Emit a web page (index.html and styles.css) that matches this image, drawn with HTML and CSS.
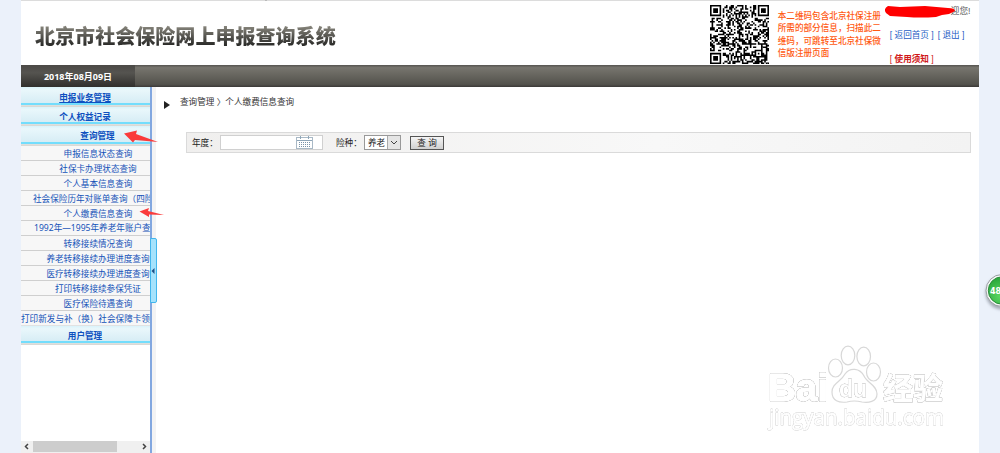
FILE: index.html
```html
<!DOCTYPE html>
<html lang="zh-CN">
<head>
<meta charset="utf-8">
<title>北京市社会保险网上申报查询系统</title>
<link rel="stylesheet" href="styles.css">
</head>
<body>
<div class="page">
  <header class="header">
    <h1 class="title">北京市社会保险网上申报查询系统</h1>
    <svg class="qr" viewBox="0 0 37 37"><path id="qr-modules" fill="#000"/></svg>
    <p class="qr-note">本二维码包含北京社保注册<br>所需的部分信息，扫描此二<br>维码，可跳转至北京社保微<br>信版注册页面</p>
    <div class="user">
      <span class="welcome">迎您!</span>
      <div class="links"><span>[ 返回首页 ]</span><span>[ 退出 ]</span></div>
      <div class="notice">[ <b>使用须知</b> ]</div>
    </div>
  </header>
  <div class="bar"><div class="date">2018年08月09日</div></div>
  <div class="main">
    <nav class="sidebar">
      <div class="head"><u>申报业务管理</u></div>
      <div class="head">个人权益记录</div>
      <div class="head sub">查询管理</div>
      <ul class="items">
        <li>申报信息状态查询</li>
        <li>社保卡办理状态查询</li>
        <li>个人基本信息查询</li>
        <li class="long">社会保险历年对账单查询（四险</li>
        <li>个人缴费信息查询</li>
        <li class="long years">1992年—1995年养老年账户查</li>
        <li>转移接续情况查询</li>
        <li>养老转移接续办理进度查询</li>
        <li>医疗转移接续办理进度查询</li>
        <li>打印转移接续参保凭证</li>
        <li>医疗保险待遇查询</li>
        <li class="long full">打印新发与补（换）社会保障卡领</li>
      </ul>
      <div class="head">用户管理</div>
      <div class="scroll">
        <svg viewBox="0 0 12 11"><path d="M7 3 4.500 5.500 7 8"/></svg>
        <i class="thumb"></i>
        <svg class="next" viewBox="0 0 12 11"><path d="M5 3 7.500 5.500 5 8"/></svg>
      </div>
    </nav>
    <div class="divider"></div>
    <section class="content">
      <div class="crumbs"><i class="marker"></i><span>查询管理 〉个人缴费信息查询</span></div>
      <div class="query">
        <span class="label">年度：</span>
        <span class="year">
          <svg viewBox="0 0 18 13"><rect x=".5" y="1.500" width="16" height="11" fill="#fff" stroke="#a9b9c6"/><path d="M1 4.500h15M4.500 0v3M12.500 0v3" stroke="#8ea5b7" fill="none"/><path d="M3 6.500h11M3 8.500h11M3 10.500h11" stroke="#7993a8" stroke-dasharray="1 1"/></svg>
        </span>
        <span class="label kind">险种：</span>
        <span class="select"><span>养老</span><i><svg viewBox="0 0 12 13"><path d="M3 5 6 8 9 5" fill="none" stroke="#444"/></svg></i></span>
        <span class="button">查 询</span>
      </div>
    </section>
  </div>
</div>
<div class="handle"><svg viewBox="0 0 4 6"><path d="M3.500 0v6L.5 3z" fill="#1d4f86"/></svg></div>
<svg class="overlay" viewBox="0 0 1000 453">
  <defs>
    <radialGradient id="ball" cx=".45" cy=".7" r=".65"><stop offset="0" stop-color="#5bd762"/><stop offset="1" stop-color="#2aa83c"/></radialGradient>
    <filter id="soft" x="-30%" y="-30%" width="160%" height="160%"><feGaussianBlur stdDeviation="1.500"/></filter>
  </defs>
  <path d="M266 0v1" stroke="#999"/>
  <path d="M888 6 900 7 925 6 948 8Q955 8 955 11L949 14 942 15 936 17Q920 18 907 17L890 16 886 13Q883 9 888 6Z" fill="#f00"/>
  <path d="M124 133.500 137 130.500 136 134 158 142 135 140 133 142.500Z" fill="#fa3b3b"/>
  <path d="M139.500 211.500 149 208 148 211 164 215 149 214.500 149 217Z" fill="#fa3b3b"/>
  <circle cx="1002" cy="293" r="16.500" fill="#6d7480" opacity=".55" filter="url(#soft)"/>
  <circle cx="1002" cy="290.500" r="16" fill="#f4f7f5" stroke="#9a9fa3"/>
  <circle cx="1002" cy="290.500" r="13.700" fill="url(#ball)" stroke="#2b8d3b" stroke-width="1"/>
  <text x="990" y="293.500" class="ball-text">48</text>
  <g class="mark">
    <g class="paw">
      <ellipse cx="835.500" cy="368" rx="7" ry="9"/><ellipse cx="848" cy="355.500" rx="6.800" ry="9.300"/>
      <ellipse cx="863.700" cy="356.500" rx="6.800" ry="9.300"/><ellipse cx="873.500" cy="372" rx="7" ry="9"/>
      <path d="M832 392C832 383 841 382 845 374C850 367 860 368 864 376C867 383 877 385 877 394C877 402 868 403 862 402Q854 400 847 402C839 403 832 401 832 392Z"/>
    </g>
    <text x="768" y="400.500" font-size="39" font-weight="bold" textLength="60">Bai</text>
    <text x="839" y="396.500" font-size="23" font-weight="bold" textLength="28" class="du">du</text>
    <text x="883" y="398.500" font-size="30" font-weight="bold" textLength="60" class="cjk">经验</text>
    <text x="769" y="425" font-size="22" textLength="175" lengthAdjust="spacingAndGlyphs" class="site">jingyan.baidu.com</text>
  </g>
</svg>
<script src="qr.js"></script>
</body>
</html>
```
FILE: styles.css
```css
* { box-sizing: border-box; }
body { margin: 0; width: 1000px; height: 453px; overflow: hidden; position: relative; background: #ebf1fa; color: #333; font-family: "Liberation Sans", "Noto Sans CJK SC", sans-serif; font-size: 8.6px; line-height: 12px; }
.page { width: 958px; height: 453px; margin-left: 21px; display: flex; flex-direction: column; background: #fff; border-top: 1px solid #dcdcdc; }
.header { height: 64px; flex: none; display: flex; }
.title { width: 301px; margin: 19px 0 0 14px; height: 32px; font: 900 20.06px/32px "Noto Sans CJK SC", sans-serif; white-space: nowrap; color: transparent; background: linear-gradient(#85837a 20%, #2c2c2a 78%); -webkit-background-clip: text; background-clip: text; }
.qr { width: 59px; height: 59px; margin: 4px 0 0 374px; flex: none; }
.qr-note { width: 106px; margin: 9px 0 0 9px; color: #ff5a12; font-weight: 500; line-height: 12.3px; white-space: nowrap; }
.user { width: 90px; margin-left: 7px; padding-top: 4px; white-space: nowrap; }
.welcome { display: block; margin-left: 61px; color: #555; }
.links { display: flex; gap: 4px; margin-top: 12px; color: #1c5cc4; }
.notice { margin-top: 12px; color: #d01818; }
.bar { height: 22px; flex: none; background: linear-gradient(#55534f 0, #77756e 12%, #53524c 88%, #3b3937 100%); }
.date { width: 114px; height: 22px; background: linear-gradient(#4b4946, #555450 35%, #302f2c); color: #fff; font: bold 9px/23px "Noto Sans", "Noto Sans CJK SC", sans-serif; text-align: center; }
.main { display: flex; flex: 1; min-height: 0; }
.sidebar { width: 129px; flex: none; overflow: hidden; display: flex; flex-direction: column; color: #1452b8; }
.head { height: 19px; flex: none; padding-right: 1px; text-align: center; font-weight: bold; line-height: 20px; color: #0d50bf; border-bottom: 1px solid #d9d9d6; background: linear-gradient(#d9f3fa 0, #e9f7fb 15%, #d7edf5 82%, #73ddfc 83%, #73ddfc 93%, #dedfdc 94%); }
.head:first-child { height: 20px; line-height: 22px; }
.head.sub { padding-left: 25px; height: 20px; }
.items { list-style: none; margin: 0; padding: 0; background: #f7f7f7; }
.items li { height: 15px; width: 154px; text-align: center; line-height: 16px; border-bottom: 1px solid #cfcfcf; white-space: nowrap; }
.items .long { text-align: left; padding-left: 12px; }
.items .years { padding-left: 13px; font-family: "Noto Sans", "Noto Sans CJK SC", sans-serif; font-size: 8.6px; line-height: 14px; }
.items .full { padding-left: 0; border-bottom-color: #e2e2e2; }
.scroll { margin-top: auto; height: 12px; flex: none; display: flex; background: #f0f0f0; }
.scroll svg { width: 12px; height: 11px; fill: none; stroke: #444; stroke-width: 1.500; }
.scroll .next { margin-left: auto; }
.thumb { width: 84px; height: 11px; background: #cdcdcd; }
.divider { width: 6px; flex: none; background: #f3f3f4; border-left: 2px solid #82a7e0; }
.content { flex: 1; }
.crumbs { display: flex; padding: 9px 0 0 8px; }
.marker { margin-top: 5px; border-left: 6px solid #222; border-top: 4px solid transparent; border-bottom: 4px solid transparent; height: 8px; }
.crumbs span { height: 12px; margin-left: 10px; }
.query { width: 785px; height: 21px; margin: 23px 0 0 30px; padding-left: 5px; display: flex; align-items: center; border: 1px solid #dadada; background: linear-gradient(90deg, #f0efee, #f8f8f8 60%, #f3f3f3); color: #222; }
.label { width: 28px; white-space: nowrap; }
.kind { margin-left: 13px; }
.year { width: 103px; height: 15px; border: 1px solid #d0d0d0; background: #fff; padding: 0 0 0 75px; }
.year svg { display: block; width: 18px; height: 13px; }
.select { width: 37px; height: 15px; display: flex; border: 1px solid #999; background: #fff; line-height: 14px; padding-left: 3px; white-space: nowrap; justify-content: space-between; }
.select i { width: 13px; background: #e5e5e5; border-left: 1px solid #aaa; }
.select svg { display: block; width: 12px; height: 13px; }
.button { width: 34px; height: 14px; margin-left: 9px; border: 1px solid #555; background: linear-gradient(#f5f5f5, #d0d0d0); text-align: center; line-height: 13px; }
.handle { position: absolute; left: 150px; top: 238px; width: 7px; height: 65px; border: 1px solid #41b6ed; border-radius: 0 2px 2px 0; background: #a5e2fc; display: flex; align-items: center; }
.handle svg { width: 4px; height: 6px; }
.overlay { position: absolute; left: 0; top: 0; width: 1000px; height: 453px; }
.ball-text { font: bold 8px "DejaVu Sans", sans-serif; fill: #fff; }
.mark { font-family: "Liberation Sans", sans-serif; }
.mark text { fill: #fff; stroke: #fff; stroke-width: 1.3; stroke-linejoin: round; filter: drop-shadow(0 0 .6px #888) drop-shadow(0 0 .4px #ccc); }
.paw { fill: #fff; stroke: #d8d8d8; stroke-width: 1.2; }
.mark .du { stroke-width: .4; }
.mark .cjk { font-family: "Noto Sans CJK SC", sans-serif; stroke-width: .8; }
.mark .site { font-family: "Open Sans", sans-serif; stroke-width: .8; filter: drop-shadow(0 0 .6px #999); }
```
FILE: qr.js
```js
// Fills the QR symbol: 37 x 37 modules with finder, timing and alignment patterns.
const size = 37;
let seed = 20180809;
function bit() {
  seed = (seed * 1103515245 + 12345) % 2147483648;
  return (seed >> 16) & 1;
}
function ring(dx, dy) {
  return Math.max(Math.abs(dx), Math.abs(dy));
}
let d = '';
for (let y = 0; y < size; y++) {
  for (let x = 0; x < size; x++) {
    let on = bit();
    if (x === 6 || y === 6) on = (x + y) % 2 === 0;
    for (const [cx, cy] of [[3, 3], [33, 3], [3, 33]]) {
      const r = ring(x - cx, y - cy);
      if (r <= 4) on = r < 2 || r === 3;
    }
    const a = ring(x - 30, y - 30);
    if (a <= 2) on = a !== 1;
    if (on) d += `M${x} ${y}h1v1h-1z`;
  }
}
document.getElementById('qr-modules').setAttribute('d', d);
```
